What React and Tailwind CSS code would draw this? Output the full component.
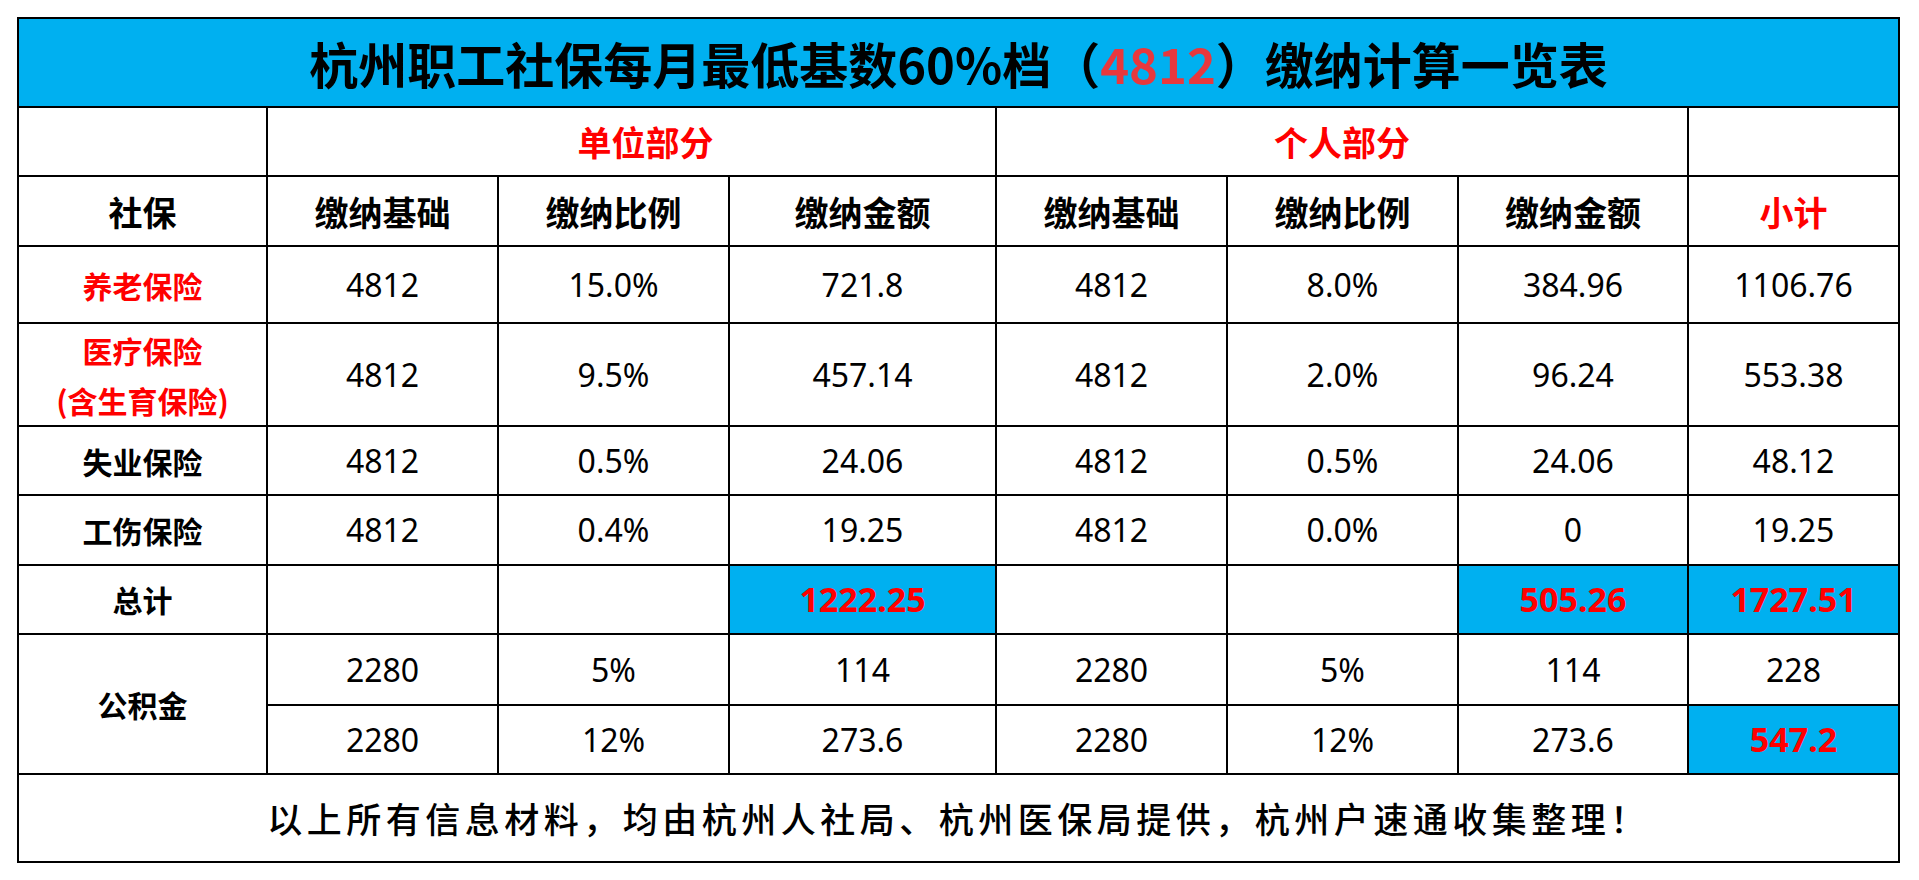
import React from "react";

const cjk = "font-['Noto_Sans_CJK_SC',sans-serif]";
const num = "font-['Noto_Sans','Noto_Sans_CJK_SC',sans-serif]";

const rows = [
  { label: "养老保险", red: true, values: ["4812", "15.0%", "721.8", "4812", "8.0%", "384.96", "1106.76"] },
  { label: "医疗保险", sub: "(含生育保险)", red: true, values: ["4812", "9.5%", "457.14", "4812", "2.0%", "96.24", "553.38"] },
  { label: "失业保险", values: ["4812", "0.5%", "24.06", "4812", "0.5%", "24.06", "48.12"] },
  { label: "工伤保险", values: ["4812", "0.4%", "19.25", "4812", "0.0%", "0", "19.25"] },
];

const heads = ["缴纳基础", "缴纳比例", "缴纳金额", "缴纳基础", "缴纳比例", "缴纳金额"];

const Cell = ({ className = "", children }) => (
  <div className={`flex items-center justify-center bg-white ${className}`}>{children}</div>
);

const Num = ({ children }) => (
  <Cell className={`${num} text-[32px] text-black`}>{children}</Cell>
);

const Hot = ({ children }) => (
  <Cell className={`${num} !bg-[#00b0f0] text-[34px] font-bold text-[#ff0000]`}>{children}</Cell>
);

export default function App() {
  return (
    <div className="min-h-screen bg-white pt-[17px] pl-[17px]">
      <div className="grid w-fit grid-cols-[247px_229px_229px_265px_229px_229px_228px_209px] grid-rows-[87px_67px_68px_75px_101px_67px_68px_67px_69px_67px_86px] gap-[2px] bg-black p-[2px]">
        {/* title */}
        <Cell className={`${cjk} col-span-8 !bg-[#00b0f0] text-[49px] font-bold text-black`}>
          杭州职工社保每月最低基数60%档（<span className="text-[#e8383d]">4812</span>）缴纳计算一览表
        </Cell>

        {/* group headers */}
        <Cell />
        <Cell className={`${cjk} col-span-3 pl-[28px] text-[34px] font-bold text-[#ff0000]`}>单位部分</Cell>
        <Cell className={`${cjk} col-span-3 text-[34px] font-bold text-[#ff0000]`}>个人部分</Cell>
        <Cell />

        {/* column headers */}
        <Cell className={`${cjk} text-[34px] font-bold text-black`}>社保</Cell>
        {heads.map((h, i) => (
          <Cell key={i} className={`${cjk} text-[34px] font-bold text-black`}>{h}</Cell>
        ))}
        <Cell className={`${cjk} text-[34px] font-bold text-[#ff0000]`}>小计</Cell>

        {/* insurance rows */}
        {rows.map((r) => (
          <React.Fragment key={r.label}>
            <Cell className={`${cjk} flex-col text-[30px] font-bold leading-[50px] ${r.red ? "text-[#ff0000]" : "text-black"}`}>
              <span>{r.label}</span>
              {r.sub && <span>{r.sub}</span>}
            </Cell>
            {r.values.map((v, i) => (
              <Num key={i}>{v}</Num>
            ))}
          </React.Fragment>
        ))}

        {/* totals */}
        <Cell className={`${cjk} text-[30px] font-bold text-black`}>总计</Cell>
        <Cell />
        <Cell />
        <Hot>1222.25</Hot>
        <Cell />
        <Cell />
        <Hot>505.26</Hot>
        <Hot>1727.51</Hot>

        {/* housing fund */}
        <Cell className={`${cjk} row-span-2 text-[30px] font-bold text-black`}>公积金</Cell>
        <Num>2280</Num>
        <Num>5%</Num>
        <Num>114</Num>
        <Num>2280</Num>
        <Num>5%</Num>
        <Num>114</Num>
        <Num>228</Num>
        <Num>2280</Num>
        <Num>12%</Num>
        <Num>273.6</Num>
        <Num>2280</Num>
        <Num>12%</Num>
        <Num>273.6</Num>
        <Hot>547.2</Hot>

        {/* footer */}
        <Cell className={`${cjk} col-span-8 text-[35px] font-medium tracking-[4.5px] text-black`}>
          以上所有信息材料，均由杭州人社局、杭州医保局提供，杭州户速通收集整理！
        </Cell>
      </div>
    </div>
  );
}
